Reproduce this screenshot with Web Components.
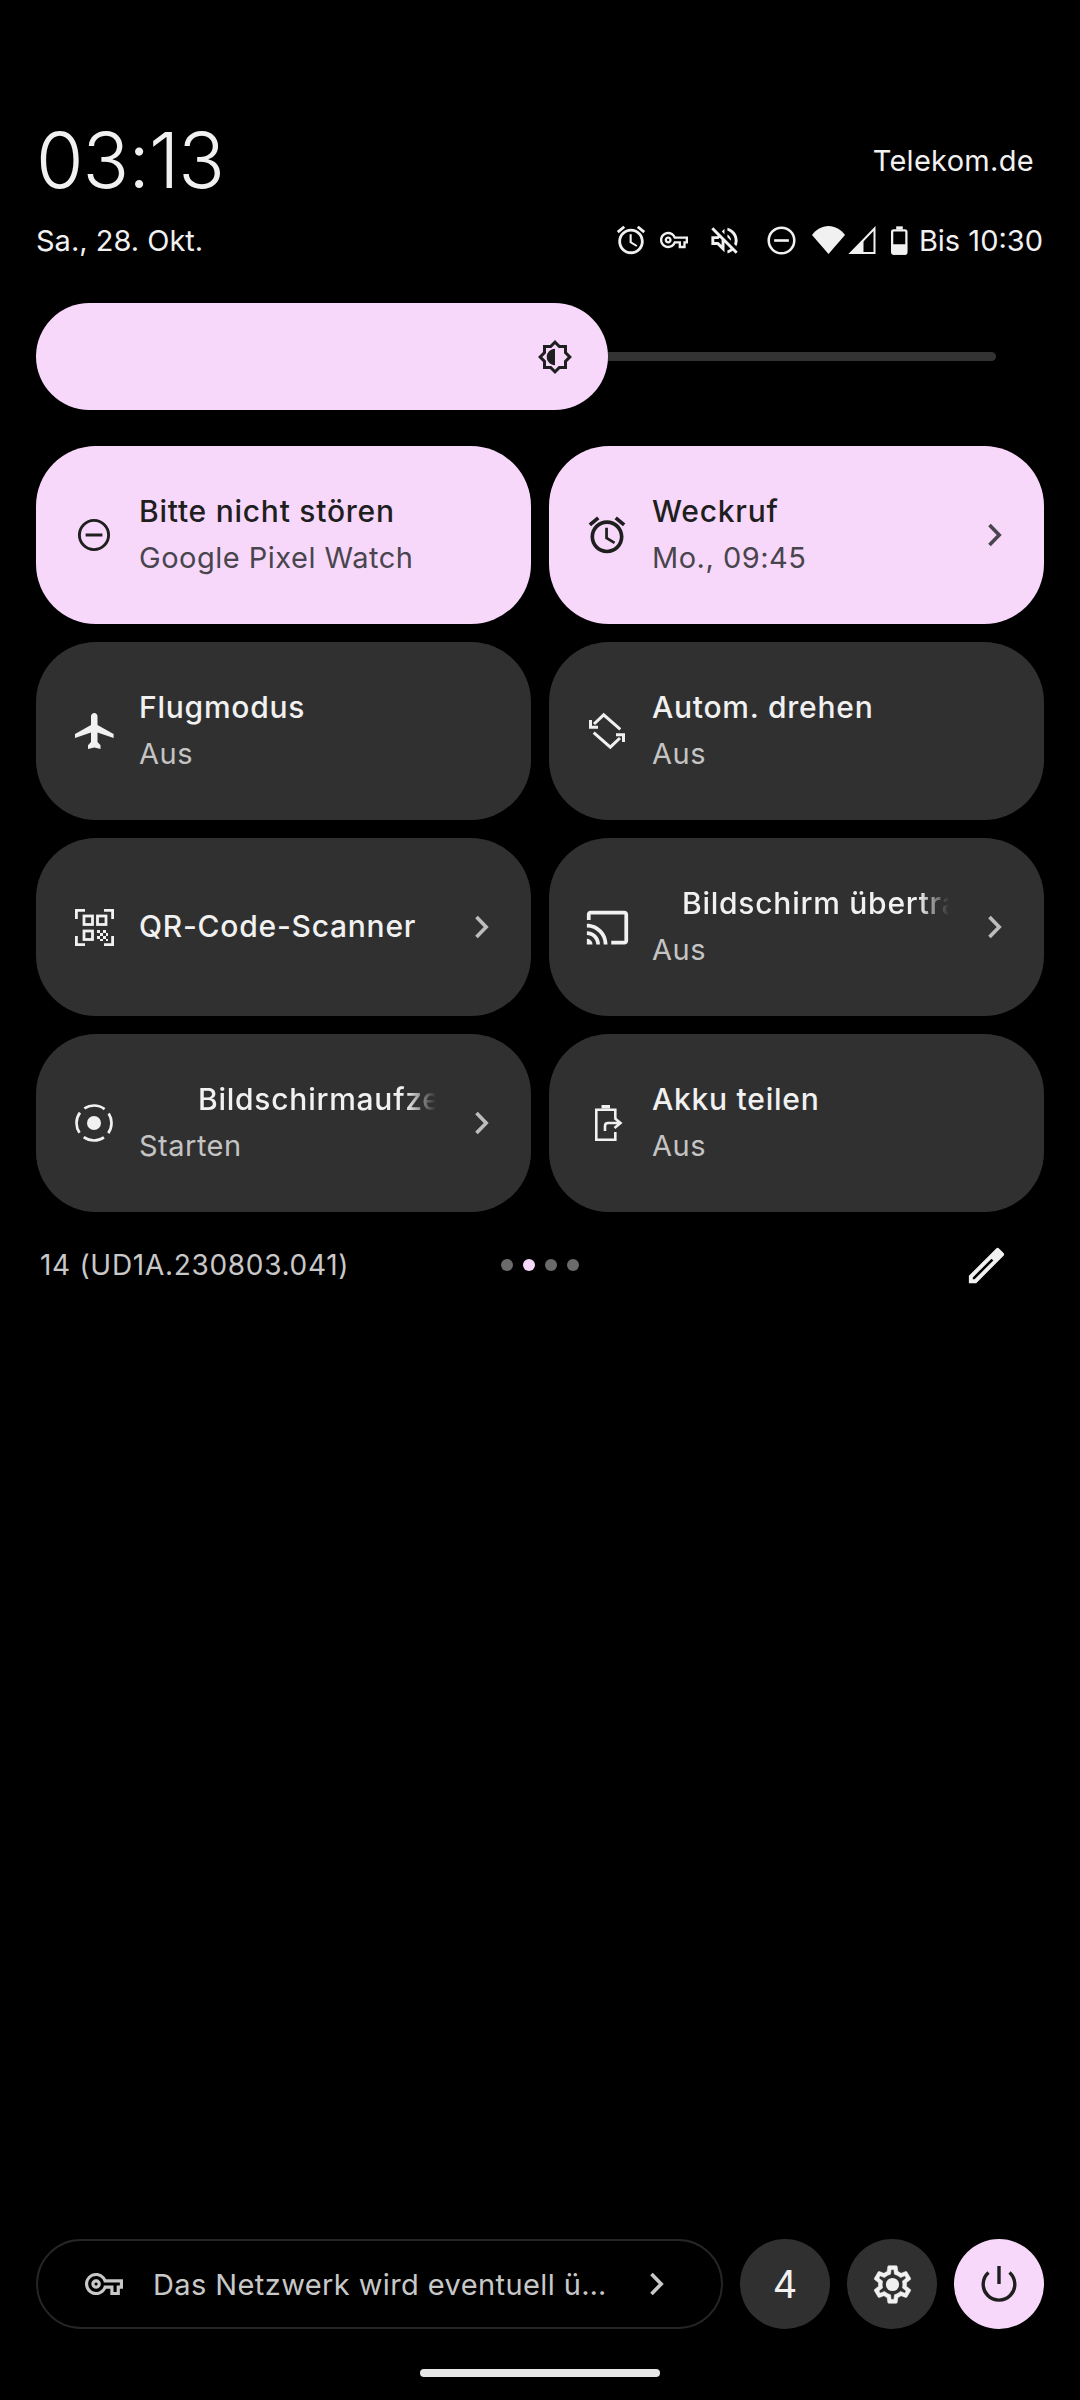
<!DOCTYPE html>
<html lang="de">
<head>
<meta charset="utf-8">
<title>Quick Settings</title>
<style>
    html, body { margin: 0; background: #000; }
    body { width: 1080px; height: 2400px; overflow: hidden; font-family: "Inter", "Roboto", "Liberation Sans", sans-serif; color: #f1f1f1; }
</style>
</head>
<body>
<qs-panel>
    <qs-header slot="header"></qs-header>
    <qs-brightness slot="header"></qs-brightness>

    <qs-tile slot="tiles" active>
        <qs-icon slot="icon" name="dnd" size="56"></qs-icon>
        <span slot="label">Bitte nicht stören</span>
        <span slot="sub">Google Pixel Watch</span>
    </qs-tile>
    <qs-tile slot="tiles" active chevron>
        <qs-icon slot="icon" name="alarm" size="44"></qs-icon>
        <span slot="label">Weckruf</span>
        <span slot="sub">Mo., 09:45</span>
    </qs-tile>
    <qs-tile slot="tiles">
        <qs-icon slot="icon" name="plane" size="39" height="36"></qs-icon>
        <span slot="label">Flugmodus</span>
        <span slot="sub">Aus</span>
    </qs-tile>
    <qs-tile slot="tiles">
        <qs-icon slot="icon" name="rotate" size="36"></qs-icon>
        <span slot="label">Autom. drehen</span>
        <span slot="sub">Aus</span>
    </qs-tile>
    <qs-tile slot="tiles" chevron>
        <qs-icon slot="icon" name="qr" size="39" height="37"></qs-icon>
        <span slot="label">QR-Code-Scanner</span>
    </qs-tile>
    <qs-tile slot="tiles" chevron marquee style="--shift: 30px">
        <qs-icon slot="icon" name="cast" size="45"></qs-icon>
        <span slot="label">Bildschirm übertragen</span>
        <span slot="sub">Aus</span>
    </qs-tile>
    <qs-tile slot="tiles" chevron marquee style="--shift: 59px">
        <qs-icon slot="icon" name="record" size="40"></qs-icon>
        <span slot="label">Bildschirmaufzeichnung</span>
        <span slot="sub">Starten</span>
    </qs-tile>
    <qs-tile slot="tiles">
        <qs-icon slot="icon" name="share" size="40"></qs-icon>
        <span slot="label">Akku teilen</span>
        <span slot="sub">Aus</span>
    </qs-tile>

    <qs-pager slot="pager">14 (UD1A.230803.041)</qs-pager>

    <qs-footer slot="footer">Das Netzwerk wird eventuell ü…</qs-footer>
</qs-panel>

<script>
const PINK = "#f8d8fa";
const DARK = "#303030";

const ICONS = {
    dnd: `<svg viewBox="0 0 56 56"><circle cx="28" cy="28" r="14.6" fill="none" stroke="currentColor" stroke-width="2.9"/><rect x="19.6" y="26.5" width="16.8" height="3" fill="currentColor"/></svg>`,
    alarm: `<svg viewBox="0 0 24 24"><path fill="currentColor" d="M22 5.72l-4.6-3.86-1.29 1.53 4.6 3.86L22 5.72zM7.88 3.39L6.6 1.86 2 5.71l1.29 1.53 4.59-3.85zM12.5 8H11v6l4.75 2.85.75-1.23-4-2.37V8zM12 4c-4.97 0-9 4.03-9 9s4.02 9 9 9c4.97 0 9-4.03 9-9s-4.03-9-9-9zm0 16c-3.87 0-7-3.13-7-7s3.13-7 7-7 7 3.13 7 7-3.13 7-7 7z"/></svg>`,
    key: `<svg viewBox="0 0 24 24"><path fill="currentColor" d="M22 19h-6v-4h-2.68c-1.14 2.42-3.6 4-6.32 4-3.86 0-7-3.14-7-7s3.14-7 7-7c2.72 0 5.17 1.58 6.32 4H24v6h-2v4zm-4-2h2v-4h2v-2H11.94l-.23-.67C11.01 8.34 9.11 7 7 7c-2.76 0-5 2.24-5 5s2.24 5 5 5c2.11 0 4.01-1.34 4.71-3.33l.23-.67H18v4zM7 15c-1.65 0-3-1.35-3-3s1.35-3 3-3 3 1.35 3 3-1.35 3-3 3zm0-4c-.55 0-1 .45-1 1s.45 1 1 1 1-.45 1-1-.45-1-1-1z"/></svg>`,
    mute: `<svg viewBox="0 0 24 24"><path fill="currentColor" d="M4.34 2.93L2.93 4.34 7.29 8.7 7 9H3v6h4l5 5v-6.59l4.18 4.18c-.65.49-1.38.88-2.18 1.11v2.06c1.34-.3 2.57-.92 3.61-1.75l2.05 2.05 1.41-1.41L4.34 2.93zM10 15.17L7.83 13H5v-2h2.83l.88-.88L10 11.41v3.76zM19 12c0 .82-.15 1.61-.41 2.34l1.53 1.53c.56-1.17.88-2.48.88-3.87 0-4.28-2.99-7.86-7-8.77v2.06c2.89.86 5 3.54 5 6.71zm-7-8l-1.88 1.88L12 7.76zm4.5 8c0-1.77-1.02-3.29-2.5-4.03v1.79l2.48 2.48c.01-.08.02-.16.02-.24z"/></svg>`,
    wifi: `<svg viewBox="0 0 33 28"><path fill="currentColor" d="M16.5 28L0 9C4 3.5 10 0 16.5 0S29 3.5 33 9z"/></svg>`,
    signal: `<svg viewBox="0 0 27 28"><path fill="none" stroke="currentColor" stroke-width="2" d="M26 2.5V27H2.5z"/><path fill="currentColor" d="M0 28L15 13V28z"/></svg>`,
    battery: `<svg viewBox="0 0 18 30"><path fill="currentColor" d="M5.5 0h7v3.5h-7z"/><rect x="1.2" y="4.2" width="15.1" height="24.6" rx="1.6" fill="none" stroke="currentColor" stroke-width="2.4"/><path fill="currentColor" d="M1 19h16v9.5a1.5 1.5 0 0 1-1.5 1.5h-13A1.5 1.5 0 0 1 1 28.5z"/></svg>`,
    sun: `<svg viewBox="0 0 24 24" style="transform:scaleX(-1)"><path fill="currentColor" d="M20 15.31L23.31 12 20 8.69V4h-4.69L12 .69 8.69 4H4v4.69L.69 12 4 15.31V20h4.69L12 23.31 15.31 20H20v-4.69zM18 14.48V18h-3.52L12 20.48 9.52 18H6v-3.52L3.52 12 6 9.52V6h3.52L12 3.52 14.48 6H18v3.52L20.48 12 18 14.48zM12 6.5v11c3.03 0 5.5-2.47 5.5-5.5S15.03 6.5 12 6.5z"/></svg>`,
    plane: `<svg viewBox="0 0 39 36"><path fill="currentColor" d="M19.3 0C21 0 22.5 1.5 22.5 3.2V12L38.6 21V25L22.5 19.5V29L25.5 32.3V36L19.3 34.5 13 36V32.3L16 29V19.5L0 25V21L16 12V3.2C16 1.5 17.6 0 19.3 0z"/></svg>`,
    rotate: `<svg viewBox="0 0 36 36"><g fill="none" stroke="currentColor" stroke-width="3"><path d="M31.3 16.3L14.7 1.8 5 11"/><path d="M1.5 7V14.3H9"/></g><g transform="rotate(180 18 18)" fill="none" stroke="currentColor" stroke-width="3"><path d="M31.3 16.3L14.7 1.8 5 11"/><path d="M1.5 7V14.3H9"/></g></svg>`,
    qr: `<svg viewBox="0 0 39 37"><g fill="none" stroke="currentColor" stroke-width="2.8"><path d="M10 1.4H1.4V10M29 1.4H37.6V10M10 35.6H1.4V27M29 35.6H37.6V27"/><rect x="9" y="7" width="8.5" height="8.5"/><rect x="22.5" y="7" width="8.5" height="8.5"/><rect x="9" y="22" width="8.5" height="8.5"/></g><path fill="currentColor" d="M22 21h3v3h-3zM28 21h3v3h-3zM25 24h3v3h-3zM31 24h2v3h-2zM22 27h3v3h-3zM28 27h3v3h-3zM25 30h3v2h-3zM31 30h2v2h-2z"/></svg>`,
    cast: `<svg viewBox="0 0 24 24"><path fill="currentColor" d="M21 3H3c-1.1 0-2 .9-2 2v3h2V5h18v14h-7v2h7c1.1 0 2-.9 2-2V5c0-1.1-.9-2-2-2zM1 18v3h3c0-1.66-1.34-3-3-3zm0-4v2c2.76 0 5 2.24 5 5h2c0-3.87-3.13-7-7-7zm0-4v2c4.97 0 9 4.03 9 9h2c0-6.08-4.93-11-11-11z"/></svg>`,
    record: `<svg viewBox="0 0 40 40"><circle cx="20" cy="20" r="17.5" fill="none" stroke="currentColor" stroke-width="2.7" stroke-dasharray="21.5 6" stroke-dashoffset="10.75"/><circle cx="20" cy="20" r="7" fill="currentColor"/></svg>`,
    share: `<svg viewBox="0 0 40 40"><g transform="translate(8 2)"><path fill="currentColor" d="M6.5 0H15V3.5H6.5z"/><path fill="none" stroke="currentColor" stroke-width="2.6" d="M20.3 13V4.7H1.3V34.7H20.3V27"/><path fill="none" stroke="currentColor" stroke-width="2.6" d="M10 26V21Q10 18 13 18H25M19.5 13L25.5 18 19.5 23"/></g></svg>`,
    edit: `<svg viewBox="0 0 24 24"><path fill="currentColor" fill-rule="evenodd" d="M3 21V17.25L16.96 3.29c.39-.39 1.02-.39 1.41 0l2.34 2.34c.39.39.39 1.02 0 1.41L6.75 21zM5 19h.92L15.5 9.44l-.92-.92L5 18.08z"/></svg>`,
    gear: `<svg viewBox="0 0 24 24"><path fill="currentColor" stroke="currentColor" stroke-width=".3" d="M19.43 12.98c.04-.32.07-.64.07-.98 0-.34-.03-.66-.07-.98l2.11-1.65c.19-.15.24-.42.12-.64l-2-3.46c-.09-.16-.26-.25-.44-.25-.06 0-.12.01-.17.03l-2.49 1c-.52-.4-1.08-.73-1.69-.98l-.38-2.65C14.46 2.18 14.25 2 14 2h-4c-.25 0-.46.18-.49.42l-.38 2.65c-.61.25-1.17.59-1.69.98l-2.49-1c-.06-.02-.12-.03-.18-.03-.17 0-.34.09-.43.25l-2 3.46c-.13.22-.07.49.12.64l2.11 1.65c-.04.32-.07.65-.07.98 0 .33.03.66.07.98l-2.11 1.65c-.19.15-.24.42-.12.64l2 3.46c.09.16.26.25.44.25.06 0 .12-.01.17-.03l2.49-1c.52.4 1.08.73 1.69.98l.38 2.65c.03.24.24.42.49.42h4c.25 0 .46-.18.49-.42l.38-2.65c.61-.25 1.17-.59 1.69-.98l2.49 1c.06.02.12.03.18.03.17 0 .34-.09.43-.25l2-3.46c.12-.22.07-.49-.12-.64l-2.11-1.65zm-1.98-1.71c.04.31.05.52.05.73 0 .21-.02.43-.05.73l-.14 1.13.89.7 1.08.84-.7 1.21-1.27-.51-1.04-.42-.9.68c-.43.32-.84.56-1.25.73l-1.06.43-.16 1.13-.2 1.35h-1.4l-.19-1.35-.16-1.13-1.06-.43c-.43-.18-.83-.41-1.23-.71l-.91-.7-1.06.43-1.27.51-.7-1.21 1.08-.84.89-.7-.14-1.13c-.03-.31-.05-.54-.05-.74s.02-.43.05-.73l.14-1.13-.89-.7-1.08-.84.7-1.21 1.27.51 1.04.42.9-.68c.43-.32.84-.56 1.25-.73l1.06-.43.16-1.13.2-1.35h1.39l.19 1.35.16 1.13 1.06.43c.43.18.83.41 1.23.71l.91.7 1.06-.43 1.27-.51.7 1.21-1.07.85-.89.7.14 1.13z"/><circle cx="12" cy="12" r="3.5" fill="currentColor"/></svg>`,
    power: `<svg viewBox="0 0 40 40"><path fill="none" stroke="currentColor" stroke-width="3.4" d="M20 2V20"/><path fill="none" stroke="currentColor" stroke-width="3.4" d="M9.5 8.5A15.8 15.8 0 1 0 30.5 8.5"/></svg>`,
    chevron: `<svg viewBox="0 0 14 22"><path fill="none" stroke="currentColor" stroke-width="3.6" d="M1.5 1L11.2 11 1.5 21"/></svg>`
};

class QsIcon extends HTMLElement {
    constructor() {
        super();
        this.attachShadow({ mode: "open" });
    }

    connectedCallback() {
        const size = this.getAttribute("size") || 24;
        const h = this.getAttribute("height") || size;
        this.shadowRoot.innerHTML = `
            <style>
                :host { display: inline-flex; flex: none; width: ${size}px; height: ${h}px; }
                svg { width: 100%; height: 100%; display: block; overflow: visible; }
            </style>
            ${ICONS[this.getAttribute("name")]}
        `;
    }
}

class QsPanel extends HTMLElement {
    constructor() {
        super();
        this.attachShadow({ mode: "open" });
        this.shadowRoot.innerHTML = `
            <style>
                :host { display: flex; flex-direction: column; height: 2400px; box-sizing: border-box; padding: 0 36px 23px; }
                .tiles { display: grid; grid-template-columns: 495px 495px; gap: 18px; margin-top: 36px; }
                .spacer { flex: 1; }
            </style>
            <slot name="header"></slot>
            <div class="tiles"><slot name="tiles"></slot></div>
            <slot name="pager"></slot>
            <div class="spacer"></div>
            <slot name="footer"></slot>
        `;
    }
}

class QsHeader extends HTMLElement {
    constructor() {
        super();
        this.attachShadow({ mode: "open" });
        this.shadowRoot.innerHTML = `
            <style>
                :host { display: block; padding-top: 120px; }
                .top { display: flex; justify-content: space-between; align-items: center; height: 80px; }
                .clock { font-size: 77px; font-weight: 300; line-height: 80px; letter-spacing: -1px; }
                .carrier { font-size: 29px; letter-spacing: .3px; margin-right: 10px; }
                .bottom { display: flex; align-items: center; height: 40px; margin-top: 20px; }
                .date { font-size: 29px; flex: 1; }
                .status { display: flex; align-items: center; }
                .until { font-size: 29px; margin: 0 1px 0 11px; }
            </style>
            <div class="top">
                <div class="clock">03:13</div>
                <div class="carrier">Telekom.de</div>
            </div>
            <div class="bottom">
                <div class="date">Sa., 28. Okt.</div>
                <div class="status">
                    <qs-icon name="alarm" size="34"></qs-icon>
                    <qs-icon name="key" size="28" style="margin-left:12px"></qs-icon>
                    <qs-icon name="mute" size="35" style="margin-left:19px"></qs-icon>
                    <qs-icon name="dnd" size="49" style="margin-left:15px"></qs-icon>
                    <qs-icon name="wifi" size="33" height="28" style="margin-left:6px"></qs-icon>
                    <qs-icon name="signal" size="28" height="28" style="margin-left:3px"></qs-icon>
                    <qs-icon name="battery" size="17" height="29" style="margin-left:15px"></qs-icon>
                    <span class="until">Bis 10:30</span>
                </div>
            </div>
        `;
    }
}

class QsBrightness extends HTMLElement {
    constructor() {
        super();
        this.attachShadow({ mode: "open" });
        this.shadowRoot.innerHTML = `
            <style>
                :host { display: flex; align-items: center; height: 107px; margin: 43px 48px 0 0; }
                .fill { width: 572px; height: 107px; border-radius: 54px; background: ${PINK}; color: #1f1f1f; display: flex; align-items: center; justify-content: flex-end; padding-right: 35px; box-sizing: border-box; position: relative; z-index: 1; }
                .track { flex: 1; height: 9px; margin-left: -30px; background: #333; border-radius: 5px; }
            </style>
            <div class="fill"><qs-icon name="sun" size="36"></qs-icon></div>
            <div class="track"></div>
        `;
    }
}

class QsTile extends HTMLElement {
    constructor() {
        super();
        this.attachShadow({ mode: "open" });
        this.shadowRoot.innerHTML = `
            <style>
                :host { display: flex; align-items: center; height: 178px; border-radius: 60px; background: ${DARK}; color: #f1f1f1; --sub: #c4c4c4; --chev: #bdbdbd; }
                :host([active]) { background: ${PINK}; color: #1f1f1f; --sub: #49454e; --chev: #49454e; }
                .ico { flex: none; width: 56px; margin-left: 30px; display: flex; justify-content: center; }
                .text { flex: 1; min-width: 0; margin-left: 17px; }
                .label { font-size: 30px; font-weight: 500; letter-spacing: .75px; line-height: 43px; padding-bottom: 2px; white-space: nowrap; overflow: hidden; }
                .sub { font-size: 29px; letter-spacing: .5px; line-height: 45px; color: var(--sub); white-space: nowrap; }
                :host([marquee]) .label { padding-left: var(--shift); -webkit-mask-image: linear-gradient(to right, #000 calc(100% - 30px), transparent); mask-image: linear-gradient(to right, #000 calc(100% - 30px), transparent); }
                .chev { display: none; flex: none; margin: 0 42px 0 39px; color: var(--chev); }
                :host([chevron]) .chev { display: block; }
            </style>
            <div class="ico"><slot name="icon"></slot></div>
            <div class="text">
                <div class="label"><slot name="label"></slot></div>
                <div class="sub"><slot name="sub"></slot></div>
            </div>
            <qs-icon class="chev" name="chevron" size="14" height="22"></qs-icon>
        `;
        if (!this.querySelector('[slot="sub"]')) {
            this.shadowRoot.querySelector(".sub").style.display = "none";
        }
    }
}

class QsPager extends HTMLElement {
    constructor() {
        super();
        this.attachShadow({ mode: "open" });
        this.shadowRoot.innerHTML = `
            <style>
                :host { display: grid; grid-template-columns: 1fr auto 1fr; align-items: center; height: 52px; margin-top: 27px; padding: 0 4px; font-size: 28px; letter-spacing: .7px; color: #c8c8c8; }
                .dots { display: flex; gap: 10px; }
                .dots i { width: 12px; height: 12px; border-radius: 50%; background: #6b6b6b; }
                .dots i.on { background: ${PINK}; }
                .edit { justify-self: end; margin-right: 30px; color: #f1f1f1; }
            </style>
            <div><slot></slot></div>
            <div class="dots"><i></i><i class="on"></i><i></i><i></i></div>
            <qs-icon class="edit" name="edit" size="47"></qs-icon>
        `;
    }
}

class QsFooter extends HTMLElement {
    constructor() {
        super();
        this.attachShadow({ mode: "open" });
        this.shadowRoot.innerHTML = `
            <style>
                :host { display: block; }
                .row { display: flex; align-items: center; gap: 17px; height: 90px; }
                .pill { flex: 1; height: 90px; box-sizing: border-box; border: 2px solid #252525; border-radius: 45px; display: flex; align-items: center; color: #c8c8c8; }
                .pill .key { margin-left: 47px; }
                .pill .msg { flex: 1; margin-left: 30px; font-size: 29px; letter-spacing: .4px; white-space: nowrap; }
                .pill .chev { margin-right: 57px; }
                .round { width: 90px; height: 90px; border-radius: 50%; background: ${DARK}; color: #f1f1f1; display: flex; align-items: center; justify-content: center; font-size: 38px; }
                .round.on { background: ${PINK}; color: #1f1f1f; }
                .home { width: 240px; height: 8px; border-radius: 4px; background: #e6e6e6; margin: 40px auto 0; }
            </style>
            <div class="row">
                <div class="pill">
                    <qs-icon class="key" name="key" size="38"></qs-icon>
                    <div class="msg"><slot></slot></div>
                    <qs-icon class="chev" name="chevron" size="14" height="22"></qs-icon>
                </div>
                <div class="round">4</div>
                <div class="round"><qs-icon name="gear" size="45"></qs-icon></div>
                <div class="round on"><qs-icon name="power" size="40"></qs-icon></div>
            </div>
            <div class="home"></div>
        `;
    }
}

customElements.define("qs-icon", QsIcon);
customElements.define("qs-panel", QsPanel);
customElements.define("qs-header", QsHeader);
customElements.define("qs-brightness", QsBrightness);
customElements.define("qs-tile", QsTile);
customElements.define("qs-pager", QsPager);
customElements.define("qs-footer", QsFooter);
</script>
</body>
</html>
